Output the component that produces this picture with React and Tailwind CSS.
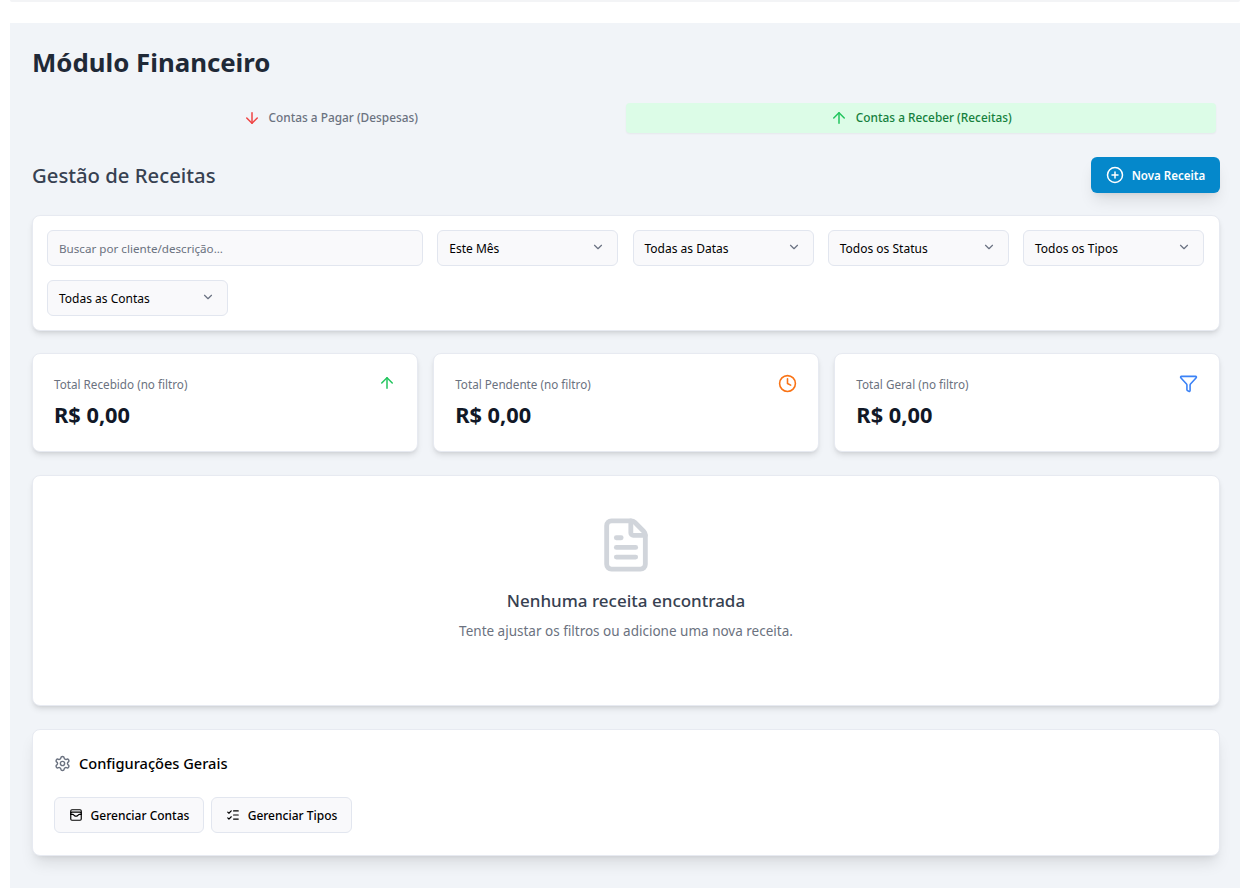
import { ArrowDown, ArrowUp, ChevronDown, CirclePlus, Clock, FileText, Filter, ListChecks, Settings, WalletCards } from 'lucide-react';

const Dropdown = ({ label }) => (
  <div className="w-[181px] h-9 flex items-center justify-between pl-[11px] pr-3 bg-[#f9f9fb] border border-[#e2e6ef] rounded-md text-xs text-black">
    <span className="pt-0.5">{label}</span>
    <ChevronDown size={14} className="text-gray-500 mb-0.5" />
  </div>
);

const StatCard = ({ label, icon }) => (
  <div className="h-[99px] bg-white border border-[#e7eaf1] rounded-lg shadow-md pl-[21px] pr-[21px] pt-5">
    <div className="flex items-start justify-between">
      <span className="text-[11.7px] leading-5 text-[#6b7280]">{label}</span>
      {icon}
    </div>
    <div className="mt-[5px] text-[21.8px] leading-8 font-bold text-[#111827]">R$ 0,00</div>
  </div>
);

const App = () => {
  return (
    <div className="h-[888px] overflow-hidden bg-white font-['Noto_Sans',sans-serif]">
      <div className="ml-2.5 mr-5 h-0.5 bg-gray-100 rounded-b-lg" />

      <div className="ml-2.5 mr-5 mt-[21px] h-[865px] bg-[#f1f4f8] pl-[22px] pr-5 pt-[19px]">
        <h1 className="text-[25.8px] leading-10 font-bold text-[#1f2937]">Módulo Financeiro</h1>

        {/* Tabs */}
        <div className="mt-[21px] grid grid-cols-2 pl-[3px] pr-1">
          <div className="h-[30px] flex items-center justify-center gap-2 text-[11.85px] font-medium text-[#6b7280]">
            <ArrowDown size={18} className="text-[#ef4444]" />
            <span>Contas a Pagar (Despesas)</span>
          </div>
          <div className="h-[30px] flex items-center justify-center gap-2 text-[11.85px] font-medium text-[#15803d] bg-[#dcfce7] rounded-sm shadow-xs">
            <ArrowUp size={18} className="text-[#22c55e]" />
            <span>Contas a Receber (Receitas)</span>
          </div>
        </div>

        <div className="mt-6 flex items-center justify-between">
          <h2 className="text-[20.3px] font-medium text-[#374151]">Gestão de Receitas</h2>
          <button className="h-9 w-[129px] flex items-center justify-center gap-2 bg-[#0588cb] text-white text-[11.55px] font-semibold rounded-md shadow-lg">
            <CirclePlus size={18} />
            <span className="pt-0.5">Nova Receita</span>
          </button>
        </div>

        {/* Filters */}
        <div className="mt-[22px] bg-white border border-[#e7eaf1] rounded-lg shadow-md p-[14px] flex flex-wrap gap-y-3.5 gap-x-[14.25px]">
          <div className="w-[376px] h-9 flex items-center pl-[11px] pt-0.5 bg-[#f9f9fb] border border-[#e2e6ef] rounded-md text-[11.65px] text-[#6b7280]">
            Buscar por cliente/descrição...
          </div>
          <Dropdown label="Este Mês" />
          <Dropdown label="Todas as Datas" />
          <Dropdown label="Todos os Status" />
          <Dropdown label="Todos os Tipos" />
          <Dropdown label="Todas as Contas" />
        </div>

        {/* Totals */}
        <div className="mt-[22px] grid grid-cols-3 gap-[15.5px]">
          <StatCard label="Total Recebido (no filtro)" icon={<ArrowUp size={18} className="text-[#22c55e]" />} />
          <StatCard label="Total Pendente (no filtro)" icon={<Clock size={19} className="text-[#f97316]" />} />
          <StatCard label="Total Geral (no filtro)" icon={<Filter size={19} className="text-[#3b82f6]" />} />
        </div>

        {/* Empty state */}
        <div className="mt-[23px] h-[231px] bg-white border border-[#e7eaf1] rounded-lg shadow-md pt-10 flex flex-col items-center">
          <FileText size={58} className="text-[#d1d5db]" />
          <h3 className="mt-[13px] text-[17px] leading-7 font-medium text-[#374151]">Nenhuma receita encontrada</h3>
          <p className="mt-1.5 text-[13.5px] leading-5 text-[#6b7280]">Tente ajustar os filtros ou adicione uma nova receita.</p>
        </div>

        {/* Settings */}
        <div className="mt-[23px] h-[127px] bg-white border border-[#e7eaf1] rounded-lg shadow-lg pl-[21px] pt-[21px]">
          <div className="flex items-center gap-2">
            <Settings size={17} className="text-[#6b7280]" />
            <span className="text-[14.6px] leading-6 font-medium text-black">Configurações Gerais</span>
          </div>
          <div className="mt-[22px] flex gap-[7px]">
            <button className="h-9 w-[150px] flex items-center justify-center gap-2 bg-[#f9f9fb] border border-[#e2e6ef] rounded-md text-xs font-medium text-black">
              <WalletCards size={14} />
              <span className="pt-0.5">Gerenciar Contas</span>
            </button>
            <button className="h-9 w-[141px] flex items-center justify-center gap-2 bg-[#f9f9fb] border border-[#e2e6ef] rounded-md text-xs font-medium text-black">
              <ListChecks size={14} />
              <span className="pt-0.5">Gerenciar Tipos</span>
            </button>
          </div>
        </div>
      </div>
    </div>
  );
};

export default App;
